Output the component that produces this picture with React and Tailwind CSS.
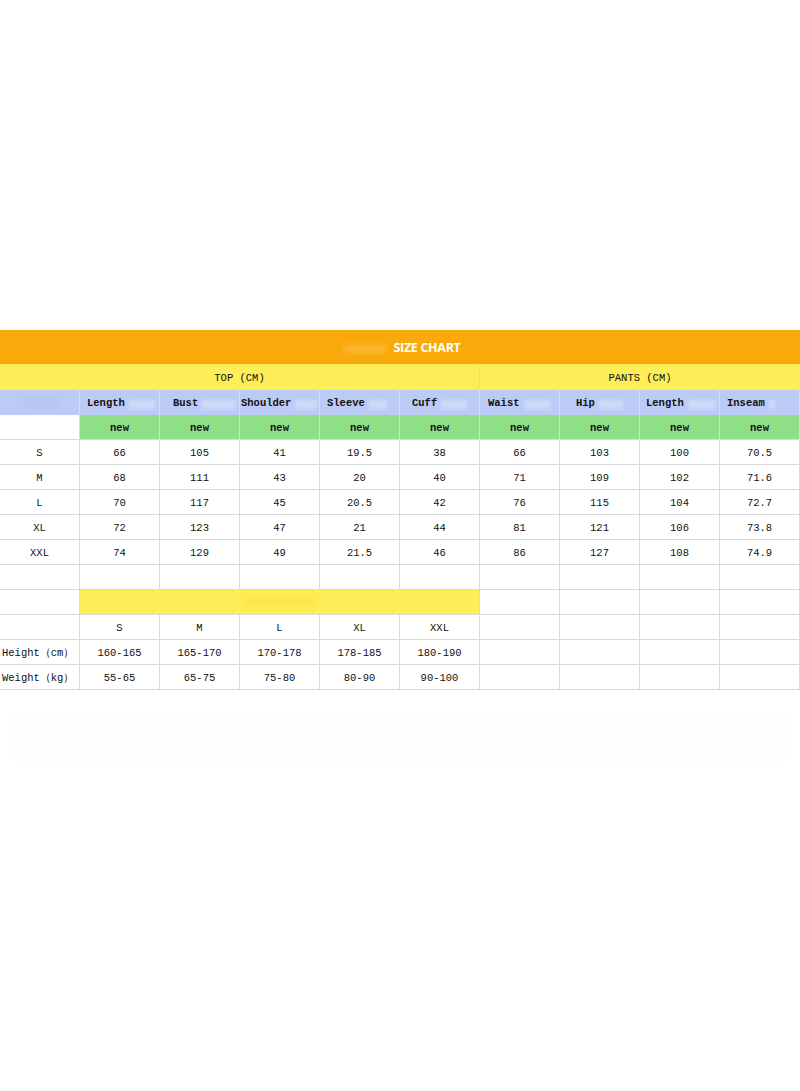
const mono = { fontFamily: '"Liberation Mono", "DejaVu Sans Mono", monospace' };

const heads = [
    { label: 'Length', pl: 'pl-[7px]', smudge: 'w-[26px]' },
    { label: 'Bust', pl: 'pl-[13px]', smudge: 'w-[34px]' },
    { label: 'Shoulder', pl: 'pl-[1px]', smudge: 'w-[22px]' },
    { label: 'Sleeve', pl: 'pl-[7px]', smudge: 'w-[18px]' },
    { label: 'Cuff', pl: 'pl-[12px]', smudge: 'w-[26px]' },
    { label: 'Waist', pl: 'pl-[8px]', smudge: 'w-[26px]' },
    { label: 'Hip', pl: 'pl-[16px]', smudge: 'w-[24px]' },
    { label: 'Length', pl: 'pl-[6px]', smudge: 'w-[28px]' },
    { label: 'Inseam', pl: 'pl-[7px]', smudge: 'w-[6px]' }
];

const rows = [
    ['S', '66', '105', '41', '19.5', '38', '66', '103', '100', '70.5'],
    ['M', '68', '111', '43', '20', '40', '71', '109', '102', '71.6'],
    ['L', '70', '117', '45', '20.5', '42', '76', '115', '104', '72.7'],
    ['XL', '72', '123', '47', '21', '44', '81', '121', '106', '73.8'],
    ['XXL', '74', '129', '49', '21.5', '46', '86', '127', '108', '74.9']
];

const sizes = ['S', 'M', 'L', 'XL', 'XXL'];
const heights = ['160-165', '165-170', '170-178', '178-185', '180-190'];
const weights = ['55-65', '65-75', '75-80', '80-90', '90-100'];

const cell = 'h-[25px] pt-[3px] border-r border-b border-[#d9d9de] flex items-center justify-center';

const Blank = ({ n }) =>
    Array.from({ length: n }).map((_, i) => <div key={i} className={cell}></div>);

const App = () => {
    return (
        <div className="w-[800px] h-[1091px] bg-white overflow-hidden text-[10.5px] text-[#111]" style={mono}>
            <div className="h-[330px]"></div>

            {/* title bar */}
            <div className="h-[34px] pt-[3px] bg-[#f9a90a] flex items-center justify-center gap-[6px]">
                <span className="w-[44px] h-[10px] rounded bg-[#fbb52a] blur-[2px] ml-[4px]"></span>
                <span
                    className="text-white font-bold text-[12.5px] tracking-tight"
                    style={{ fontFamily: '"Open Sans", "Noto Sans", sans-serif' }}>
                    SIZE CHART
                </span>
            </div>

            {/* section titles */}
            <div className="grid grid-cols-10 h-[26px] pt-[3px] bg-[#fdee57]">
                <div className="col-span-6 border-r border-[#e2dca8] flex items-center justify-center">
                    TOP (CM)
                </div>
                <div className="col-span-4 flex items-center justify-center">PANTS (CM)</div>
            </div>

            {/* column names */}
            <div className="grid grid-cols-10 h-[25px] bg-[#bccbf6]">
                <div className="border-r border-[#d3dcf7] flex items-center pl-[22px]">
                    <span className="w-[38px] h-[12px] bg-[#b6c6f4] blur-[3px]"></span>
                </div>
                {heads.map((h, i) => (
                    <div
                        key={i}
                        className={`border-r border-[#d3dcf7] pt-[3px] flex items-center gap-[4px] ${h.pl}`}>
                        <span className="font-semibold">{h.label}</span>
                        <span className={`h-[9px] bg-[#cfd9f8] blur-[1.5px] ${h.smudge}`}></span>
                    </div>
                ))}
            </div>

            {/* new row */}
            <div className="grid grid-cols-10">
                <div className={cell}></div>
                {heads.map((_, i) => (
                    <div key={i} className={`${cell} bg-[#8fdf87] border-[#c6e9c2] font-bold`}>
                        new
                    </div>
                ))}
            </div>

            {rows.map((r, i) => (
                <div key={i} className="grid grid-cols-10">
                    {r.map((v, j) => (
                        <div key={j} className={cell}>
                            {v}
                        </div>
                    ))}
                </div>
            ))}

            <div className="grid grid-cols-10">
                <Blank n={10} />
            </div>

            <div className="grid grid-cols-10">
                <div className={cell}></div>
                <div className="col-span-5 h-[25px] border-r border-b border-[#d9d9de] bg-[#fdee57] flex items-center justify-center">
                    <span className="w-[70px] h-[10px] bg-[#fbe54a] blur-[3px]"></span>
                </div>
                <Blank n={4} />
            </div>

            <div className="grid grid-cols-10">
                <div className={cell}></div>
                {sizes.map((s) => (
                    <div key={s} className={cell}>
                        {s}
                    </div>
                ))}
                <Blank n={4} />
            </div>

            <div className="grid grid-cols-10">
                <div className={`${cell} justify-start pl-[2px] whitespace-nowrap`}>Height（cm）</div>
                {heights.map((s) => (
                    <div key={s} className={cell}>
                        {s}
                    </div>
                ))}
                <Blank n={4} />
            </div>

            <div className="grid grid-cols-10">
                <div className={`${cell} justify-start pl-[2px] whitespace-nowrap`}>Weight（kg）</div>
                {weights.map((s) => (
                    <div key={s} className={cell}>
                        {s}
                    </div>
                ))}
                <Blank n={4} />
            </div>

            <div className="mt-[24px] mx-[14px] h-[48px] bg-[#fdfdfd]"></div>
        </div>
    );
};

export default App;
